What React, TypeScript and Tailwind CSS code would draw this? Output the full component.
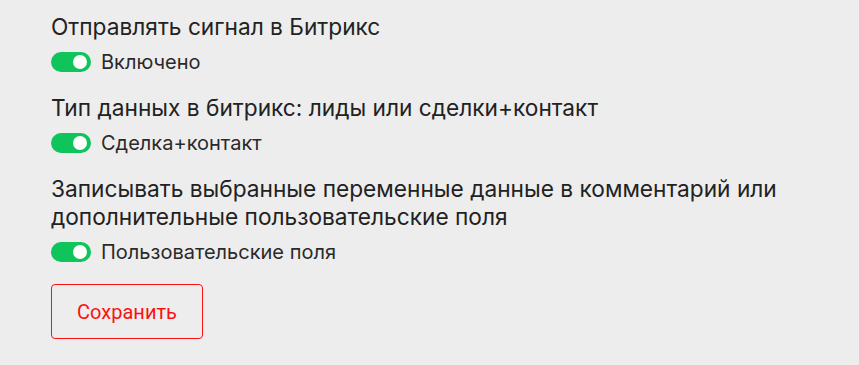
import { useState } from "react";

type Row = { title: string; label: string };

const rows: Row[] = [
  { title: "Отправлять сигнал в Битрикс", label: "Включено" },
  { title: "Тип данных в битрикс: лиды или сделки+контакт", label: "Сделка+контакт" },
  {
    title:
      "Записывать выбранные переменные данные в комментарий или дополнительные пользовательские поля",
    label: "Пользовательские поля",
  },
];

function Toggle({ on, onClick }: { on: boolean; onClick: () => void }) {
  return (
    <button
      type="button"
      onClick={onClick}
      className={`relative flex h-5 w-10 shrink-0 items-center rounded-full ${on ? "bg-[#10c45c]" : "bg-[#c4c4c4]"}`}
    >
      <span
        className={`absolute top-[3px] h-[14px] w-[14px] rounded-full bg-white ${on ? "left-[22px]" : "left-[4px]"}`}
      />
    </button>
  );
}

export default function App() {
  const [state, setState] = useState([true, true, true]);

  const flip = (i: number) => setState((s) => s.map((v, j) => (j === i ? !v : v)));

  return (
    <div className="h-[365px] w-full bg-[#ededed] pl-[51px] pt-[13px] font-['Inter',sans-serif] text-[#222]">
      <div className="flex max-w-[800px] flex-col">
        {rows.map((r, i) => (
          <div key={i} className="mb-[21px] flex flex-col">
            <h3 className="text-[22.7px] leading-[28px] font-normal">{r.title}</h3>
            <div className="mt-[10px] flex h-[22px] items-center gap-[10px]">
              <Toggle on={state[i]} onClick={() => flip(i)} />
              <span className="text-[20px] leading-[22px] text-[#2a2a2a]">{r.label}</span>
            </div>
          </div>
        ))}
        <button
          type="button"
          className="h-[55px] w-[152px] rounded-[4px] border border-[#ff1010] font-['Roboto',sans-serif] text-[20px] text-[#ff1010]"
        >
          Сохранить
        </button>
      </div>
    </div>
  );
}
